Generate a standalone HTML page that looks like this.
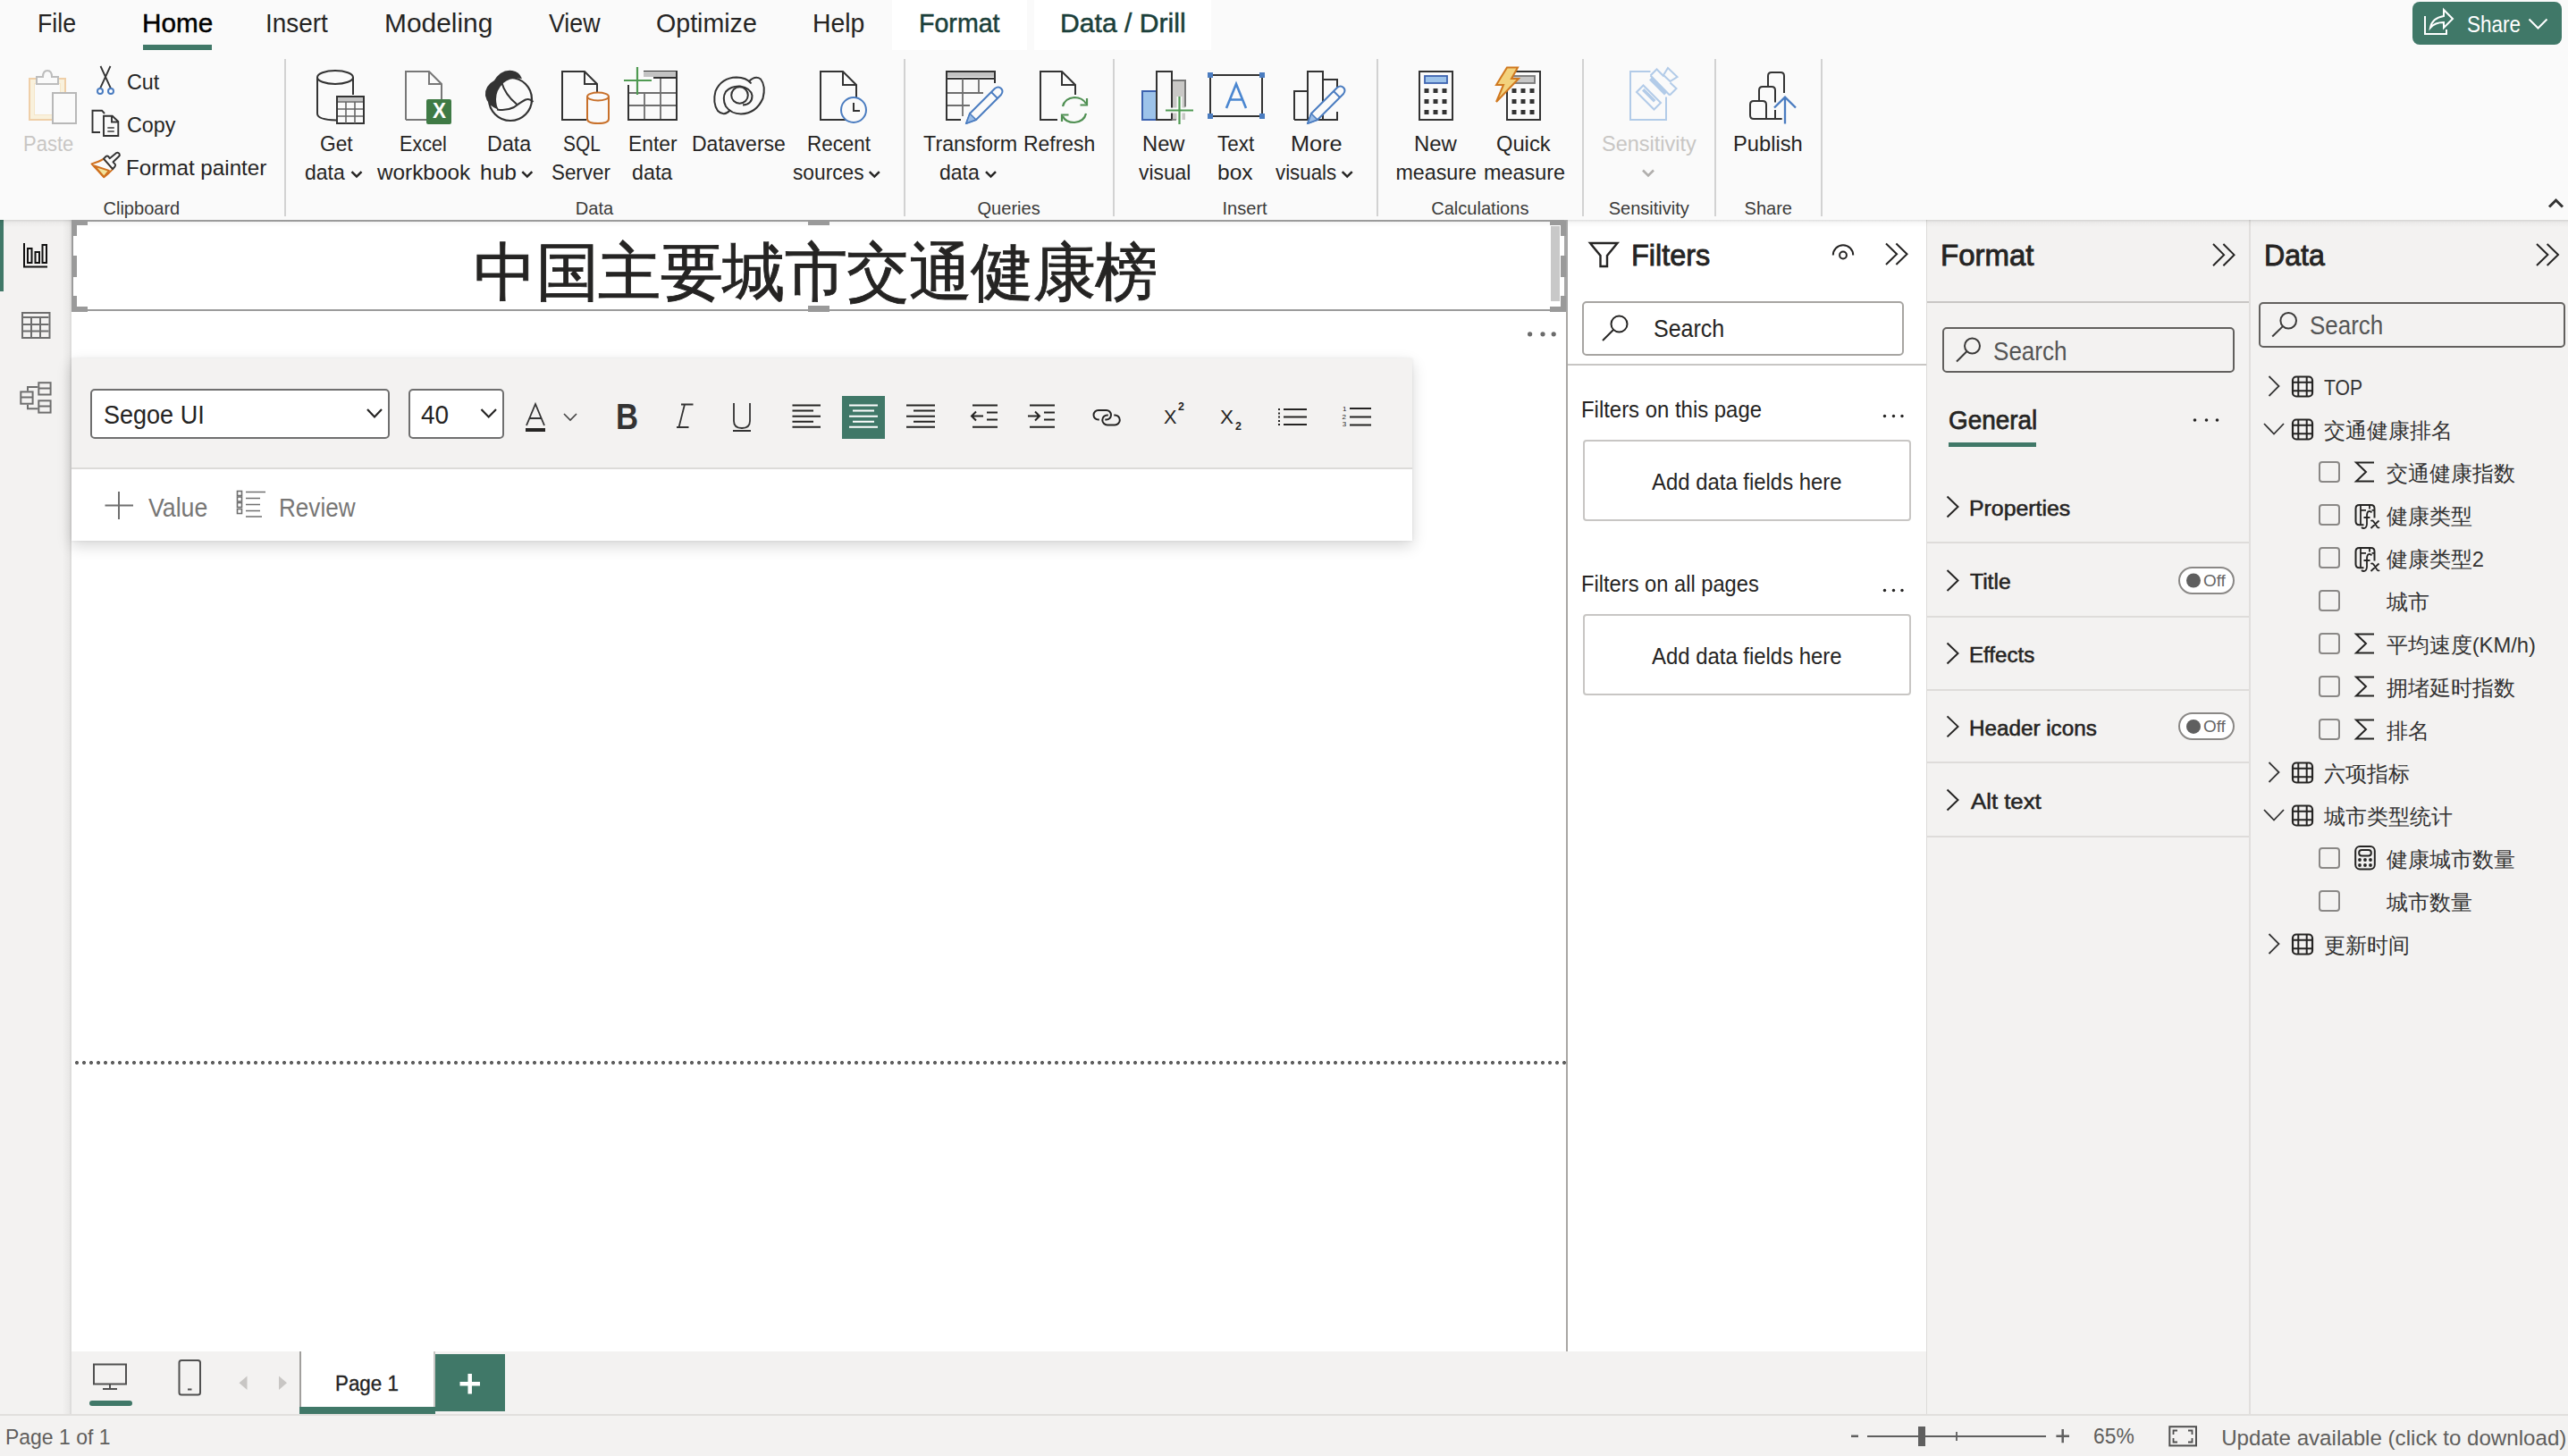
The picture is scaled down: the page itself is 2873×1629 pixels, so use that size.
<!DOCTYPE html>
<html><head><meta charset="utf-8"><style>
html,body{margin:0;padding:0;}
body{width:2873px;height:1629px;position:relative;overflow:hidden;background:#fafafa;font-family:"Liberation Sans",sans-serif;}
div{position:absolute;}
.t{white-space:nowrap;transform-origin:0 0;}
svg{position:absolute;left:0;top:0;}
</style></head><body>
<div style="left:0px;top:0px;width:2873px;height:246px;background:#fafafa;"></div><div style="left:0px;top:246px;width:79px;height:1336px;background:#f3f2f1;"></div><div style="left:70px;top:246px;width:10px;height:1336px;background:linear-gradient(90deg,rgba(0,0,0,0),rgba(0,0,0,0.06));"></div><div style="left:78px;top:246px;width:2px;height:1336px;background:#dedddc;"></div><div style="left:0px;top:246px;width:4px;height:80px;background:#407868;"></div><div style="left:80px;top:246px;width:1672px;height:1266px;background:#ffffff;"></div><div style="left:1752px;top:246px;width:403px;height:1266px;background:#ffffff;"></div><div style="left:1752px;top:246px;width:2px;height:1266px;background:#a9a7a4;"></div><div style="left:2155px;top:246px;width:362px;height:1336px;background:#f3f2f1;"></div><div style="left:2155px;top:246px;width:1px;height:1336px;background:#dcdbd9;"></div><div style="left:2516px;top:246px;width:2px;height:1336px;background:#e1dfdd;"></div><div style="left:2518px;top:246px;width:355px;height:1336px;background:#f3f2f1;"></div><div style="left:80px;top:1512px;width:2075px;height:70px;background:#f3f2f1;"></div><div style="left:0px;top:1582px;width:2873px;height:47px;background:#f3f2f1;"></div><div style="left:0px;top:1582px;width:2873px;height:2px;background:#e1dfdd;"></div><div style="left:0px;top:246px;width:2873px;height:8px;background:linear-gradient(rgba(0,0,0,0.13),rgba(0,0,0,0.03) 35%,rgba(0,0,0,0));"></div><div style="left:160px;top:50px;width:77px;height:6px;background:#407868;"></div><div style="left:998px;top:0px;width:151px;height:56px;background:#ffffff;"></div><div style="left:1157px;top:0px;width:198px;height:56px;background:#ffffff;"></div><div style="left:318px;top:66px;width:2px;height:176px;background:#d2d2d2;"></div><div style="left:1011px;top:66px;width:2px;height:176px;background:#d2d2d2;"></div><div style="left:1245px;top:66px;width:2px;height:176px;background:#d2d2d2;"></div><div style="left:1540px;top:66px;width:2px;height:176px;background:#d2d2d2;"></div><div style="left:1770px;top:66px;width:2px;height:176px;background:#d2d2d2;"></div><div style="left:1918px;top:66px;width:2px;height:176px;background:#d2d2d2;"></div><div style="left:2037px;top:66px;width:2px;height:176px;background:#d2d2d2;"></div><div style="left:2699px;top:2px;width:167px;height:48px;background:#407868;border-radius:8px;"></div><div style="left:80px;top:246px;width:1674px;height:2px;background:#9b9b9b;"></div><div style="left:80px;top:346px;width:1674px;height:2px;background:#9b9b9b;"></div><div style="left:80px;top:246px;width:2px;height:102px;background:#9b9b9b;"></div><div style="left:1750px;top:246px;width:4px;height:102px;background:#a6a6a6;"></div><div style="left:80px;top:247px;width:18px;height:5px;background:#9a9a9a;"></div><div style="left:80px;top:247px;width:6px;height:17px;background:#9a9a9a;"></div><div style="left:80px;top:286px;width:6px;height:24px;background:#9a9a9a;"></div><div style="left:80px;top:331px;width:6px;height:18px;background:#9a9a9a;"></div><div style="left:80px;top:343px;width:18px;height:6px;background:#9a9a9a;"></div><div style="left:904px;top:247px;width:24px;height:5px;background:#9a9a9a;"></div><div style="left:904px;top:342px;width:24px;height:7px;background:#9a9a9a;"></div><div style="left:1734px;top:247px;width:18px;height:5px;background:#9a9a9a;"></div><div style="left:1746px;top:247px;width:6px;height:17px;background:#9a9a9a;"></div><div style="left:1746px;top:286px;width:6px;height:24px;background:#9a9a9a;"></div><div style="left:1746px;top:331px;width:6px;height:18px;background:#9a9a9a;"></div><div style="left:1734px;top:343px;width:18px;height:6px;background:#9a9a9a;"></div><div style="left:1735px;top:252.5px;width:10px;height:84.5px;background:#c8c8c8;"></div><div style="left:80px;top:401px;width:1500px;height:204px;background:#ffffff;box-shadow:0 6px 16px rgba(0,0,0,0.16),0 0 3px rgba(0,0,0,0.08);"></div><div style="left:80px;top:401px;width:1500px;height:122px;background:#f3f2f1;"></div><div style="left:80px;top:523px;width:1500px;height:2px;background:#dcdbd9;"></div><div style="left:100.5px;top:434.5px;width:335.0px;height:56.0px;background:#fff;border:2px solid #6f6f6f;box-sizing:border-box;border-radius:5px;"></div><div style="left:456.5px;top:434.5px;width:107.0px;height:56.0px;background:#fff;border:2px solid #6f6f6f;box-sizing:border-box;border-radius:5px;"></div><div style="left:588px;top:478.5px;width:22px;height:4.0px;background:#252423;"></div><div style="left:942px;top:443px;width:48px;height:48px;background:#407868;"></div><div style="left:84px;top:1187px;width:1668px;height:4px;background-image:radial-gradient(circle at 2px 2px,#5f5f5f 1.8px,rgba(95,95,95,0) 2.3px);background-size:8px 4px;"></div><div style="left:1770px;top:337px;width:360px;height:61px;background:#fff;border:2px solid #a7a5a2;box-sizing:border-box;border-radius:5px;"></div><div style="left:1754px;top:407px;width:401px;height:2px;background:#c8c6c4;"></div><div style="left:1771px;top:492px;width:367px;height:91px;background:#fff;border:2px solid #c8c6c4;box-sizing:border-box;border-radius:4px;"></div><div style="left:1771px;top:687px;width:367px;height:91px;background:#fff;border:2px solid #c8c6c4;box-sizing:border-box;border-radius:4px;"></div><div style="left:2156px;top:337px;width:360px;height:2px;background:#c8c6c4;"></div><div style="left:2172.5px;top:365.5px;width:327.0px;height:51.5px;border:2px solid #62605e;box-sizing:border-box;border-radius:5px;"></div><div style="left:2180px;top:495px;width:98px;height:4.5px;background:#407868;"></div><div style="left:2156px;top:606px;width:360px;height:2px;background:#dedcda;"></div><div style="left:2156px;top:689px;width:360px;height:2px;background:#dedcda;"></div><div style="left:2436.5px;top:634.0px;width:63.0px;height:31.0px;background:#fff;border:2px solid #8a8886;box-sizing:border-box;border-radius:16px;"></div><div style="left:2156px;top:771px;width:360px;height:2px;background:#dedcda;"></div><div style="left:2156px;top:852px;width:360px;height:2px;background:#dedcda;"></div><div style="left:2436.5px;top:797.4px;width:63.0px;height:31.0px;background:#fff;border:2px solid #8a8886;box-sizing:border-box;border-radius:16px;"></div><div style="left:2156px;top:935px;width:360px;height:2px;background:#dedcda;"></div><div style="left:2526.5px;top:337.7px;width:343.0px;height:51.30000000000001px;border:2px solid #62605e;box-sizing:border-box;border-radius:5px;"></div><div style="left:2594px;top:516px;width:24px;height:24px;border:2px solid #8a8886;box-sizing:border-box;border-radius:4px;"></div><div style="left:2594px;top:564px;width:24px;height:24px;border:2px solid #8a8886;box-sizing:border-box;border-radius:4px;"></div><div style="left:2594px;top:612px;width:24px;height:24px;border:2px solid #8a8886;box-sizing:border-box;border-radius:4px;"></div><div style="left:2594px;top:660px;width:24px;height:24px;border:2px solid #8a8886;box-sizing:border-box;border-radius:4px;"></div><div style="left:2594px;top:708px;width:24px;height:24px;border:2px solid #8a8886;box-sizing:border-box;border-radius:4px;"></div><div style="left:2594px;top:756px;width:24px;height:24px;border:2px solid #8a8886;box-sizing:border-box;border-radius:4px;"></div><div style="left:2594px;top:804px;width:24px;height:24px;border:2px solid #8a8886;box-sizing:border-box;border-radius:4px;"></div><div style="left:2594px;top:948px;width:24px;height:24px;border:2px solid #8a8886;box-sizing:border-box;border-radius:4px;"></div><div style="left:2594px;top:996px;width:24px;height:24px;border:2px solid #8a8886;box-sizing:border-box;border-radius:4px;"></div><div style="left:100px;top:1567px;width:48px;height:6px;background:#407868;border-radius:3px;"></div><div style="left:335px;top:1512px;width:152px;height:70px;background:#ffffff;"></div><div style="left:335px;top:1512px;width:2px;height:70px;background:#a19f9d;"></div><div style="left:485px;top:1512px;width:2px;height:70px;background:#c8c6c4;"></div><div style="left:335px;top:1574px;width:152px;height:8px;background:#407868;"></div><div style="left:487px;top:1515px;width:78px;height:64px;background:#407868;"></div><div style="left:2146px;top:1596px;width:8px;height:21.700000000000045px;background:#5f5f5f;"></div>
<svg width="2873" height="1629" viewBox="0 0 2873 1629" fill="none" stroke-linecap="butt">
<path d="M393.5 192.05 L399 197.55 L404.5 192.05" stroke="#252423" stroke-width="2.5"/><path d="M584.3 192.05 L589.8 197.55 L595.3 192.05" stroke="#252423" stroke-width="2.5"/><path d="M972.8 192.05 L978.3 197.55 L983.8 192.05" stroke="#252423" stroke-width="2.5"/><path d="M1103.0 192.05 L1108.5 197.55 L1114.0 192.05" stroke="#252423" stroke-width="2.5"/><path d="M1501.7 192.05 L1507.2 197.55 L1512.7 192.05" stroke="#252423" stroke-width="2.5"/><path d="M1838.0 190.5 L1844 196.5 L1850.0 190.5" stroke="#b0aeac" stroke-width="2.5"/><rect x="33" y="88" width="40" height="46" fill="#f9f1dc" stroke="#efcfa8" stroke-width="2"/><rect x="38.5" y="93.5" width="29" height="35" fill="#fafafa" stroke="#f5e6c8" stroke-width="1"/><path d="M41 94 V86 H48 Q48 79 53 79 Q58 79 58 86 H65 V94 Z" fill="#fafafa" stroke="#bdbdbd" stroke-width="2"/><rect x="59" y="104" width="26" height="34" fill="#fafafa" stroke="#b8b8b8" stroke-width="2"/><path d="M112.5 74 L124 99 M123.5 74 L112 99" stroke="#333333" stroke-width="1.8"/><circle cx="112" cy="102" r="3" stroke="#4a7cc0" stroke-width="2" fill="#fff"/><circle cx="124" cy="102" r="3" stroke="#4a7cc0" stroke-width="2" fill="#fff"/><path d="M112 148 H103.5 V123.7 H114 L117 127" stroke="#333333" stroke-width="1.9"/><path d="M116 152 V129.7 H125.7 L132.3 136 V152 Z M125 129.7 V136.5 H132.3" stroke="#333333" stroke-width="1.9" fill="#fafafa"/><path d="M120.3 143 H127.8 M120.3 147 H127.8" stroke="#6a6a6a" stroke-width="1.9"/><path d="M102.5 183.3 Q111 181 116 177.6 L126.2 189.2 Q121 195 116.3 198.3 Z" fill="#fafafa" stroke="#d0701e" stroke-width="1.9" stroke-linejoin="round"/><path d="M105.5 185.5 L122 190.8 L116.3 197.8 Z" fill="#f2e29a" stroke="#d0701e" stroke-width="1.9" stroke-linejoin="round"/><path d="M116 177.6 L118.5 175 Q120 174 121.5 175.3 L122.7 177.2 L130.3 171 Q132 170 133.4 171.8 Q134.5 173.5 133 175 L126.5 181.3 L128.7 183.6 Q129.7 185 128.5 186.3 L126.2 189.2 Z" stroke="#333333" stroke-width="1.9" fill="#fafafa" stroke-linejoin="round"/><path d="M355 86.5 V127 Q355 134 376 134.5" stroke="#333333" stroke-width="2"/><path d="M395 86.5 V106" stroke="#333333" stroke-width="2"/><ellipse cx="375" cy="86.5" rx="20" ry="7.5" stroke="#333333" stroke-width="2"/><rect x="377" y="108" width="30" height="30" fill="#fafafa" stroke="#333333" stroke-width="2"/><rect x="378" y="109" width="28" height="4.5" fill="#c3c3c3"/><path d="M378 114 H406 M378 122 H406 M378 130 H406 M387 114 V138 M397 114 V138" stroke="#666" stroke-width="1.6"/><path d="M454 134 H477 M454 134 V80 H480 L494 94 V111 M480 80 V94 H494" stroke="#777" stroke-width="2"/><rect x="477" y="111" width="28" height="28" rx="2" fill="#3f7a45"/><circle cx="571" cy="111" r="24" stroke="#333333" stroke-width="2.2"/><path d="M558 123 Q545 118 543 107 Q542 96 553 90 Q556 85 560 82 Q566 78 573 79 Q581 80 584 88 Q572 86 563 93 Q555 101 555 111 Q555 118 558 123 Z" fill="#333333"/><path d="M561 91.5 Q565 106 578 116.5 M556 122.5 Q566 124.5 575 120 Q583 114 588 111.5 Q593 110 596.5 114" stroke="#333333" stroke-width="2"/><path d="M656 134 H629 V80 H654 L668 94 V104 M654 80 V94 H668" stroke="#333333" stroke-width="2"/><path d="M657 108 V133 Q657 138 669 138 Q681 138 681 133 V108" stroke="#c8702a" stroke-width="2" fill="#fafafa"/><ellipse cx="669" cy="108" rx="12" ry="4.5" stroke="#c8702a" stroke-width="2" fill="#fafafa"/><path d="M703 95 V134 H757 V80 H720" stroke="#333333" stroke-width="2"/><rect x="720" y="80" width="36" height="6" fill="#c3c3c3"/><path d="M731 87 H756" stroke="#333333" stroke-width="2"/><path d="M704 104 H756 M704 118 H756 M721 104 V133 M739 88 V133 M712 104 H704" stroke="#6e6e6e" stroke-width="1.8"/><path d="M713 75 V106 M698 90 H729" stroke="#4f9a52" stroke-width="2.2"/><path d="M817 123 Q810 131 803 124 Q797 115 800.5 102 Q807 87 824 86.5 Q835 86.5 840.5 93.5" stroke="#333333" stroke-width="2"/><path d="M837.5 91.5 Q845 84 851 88.5 Q857 96 853.5 110 Q846 127 829 127.5 Q818 127.5 812 119 Q807.5 110 812 102.5 Q818 96 828 96.5 Q840 98.5 841.5 107 Q841.5 117 831 117.5" stroke="#333333" stroke-width="2"/><circle cx="827.5" cy="106.5" r="9.3" stroke="#333333" stroke-width="2"/><path d="M950 134 H918 V80 H943 L958 95 V110 M943 80 V95 H958" stroke="#333333" stroke-width="2"/><circle cx="955" cy="123" r="14" stroke="#4a7cc0" stroke-width="2" fill="#fafafa"/><path d="M955 115 V124 H962" stroke="#333333" stroke-width="2"/><path d="M1075 134 H1059 V80 H1113 V93" stroke="#333333" stroke-width="2"/><rect x="1060" y="81" width="52" height="5" fill="#c3c3c3"/><path d="M1059 88 H1113" stroke="#333333" stroke-width="2"/><path d="M1060 104 H1100 M1060 118 H1085 M1077 88 V130 M1095 88 V105" stroke="#6e6e6e" stroke-width="1.8"/><path d="M1081 138 L1085 127 L1113 99 Q1117 96 1120 99 Q1123 102 1120 106 L1092 134 Z" fill="#fafafa" stroke="#4a7cc0" stroke-width="2" stroke-linejoin="round"/><path d="M1081 138 L1085 127 L1092 134 Z" fill="#9bbde6" stroke="#4a7cc0" stroke-width="1.5"/><path d="M1109 103 L1116 110" stroke="#4a7cc0" stroke-width="1.8"/><path d="M1183 134 H1164 V80 H1188 L1203 95 V106 M1188 80 V95 H1203" stroke="#333333" stroke-width="2"/><path d="M1189 119 Q1191 110 1202 109 Q1211 109 1215 116 M1215 127 Q1213 136 1202 137 Q1192 137 1189 130" stroke="#4f8f52" stroke-width="2.2" fill="none"/><path d="M1216 110 V117.5 H1208.5 M1188 136 V128.5 H1195.5" stroke="#4f8f52" stroke-width="2.2"/><rect x="1278" y="102" width="16" height="32" fill="#9dc3ea" stroke="#3d63b0" stroke-width="2"/><path d="M1311 90 H1326 V134 H1311 Z" fill="#c9c8c6"/><path d="M1311 90 H1326 V119.5" stroke="#777" stroke-width="2"/><rect x="1294" y="80" width="17" height="54" fill="#fafafa" stroke="#333333" stroke-width="2"/><path d="M1319.5 108 V139 M1304 123.5 H1335" stroke="#fafafa" stroke-width="6"/><path d="M1311 134 H1316" stroke="#777" stroke-width="1.6"/><path d="M1319.5 108 V139 M1304 123.5 H1335" stroke="#4f9a52" stroke-width="2.2"/><rect x="1354" y="84" width="58" height="46" stroke="#333333" stroke-width="2"/><rect x="1351" y="81" width="6" height="6" fill="#4a7cc0"/><rect x="1409" y="81" width="6" height="6" fill="#4a7cc0"/><rect x="1351" y="127" width="6" height="6" fill="#4a7cc0"/><rect x="1409" y="127" width="6" height="6" fill="#4a7cc0"/><path d="M1372 121 L1383 94 L1394 121 M1376 111.5 H1390" stroke="#4a86d0" stroke-width="2.6"/><path d="M1448 134 V102 H1463 M1463 134 V80 H1480 V134 M1480 89 H1496 V103 M1496 125 V134 H1448" stroke="#333333" stroke-width="2" fill="#fafafa"/><path d="M1463 138 L1467 127 L1496 98 Q1500 95 1503 98 Q1506 101 1503 105 L1474 134 Z" fill="#fafafa" stroke="#4a7cc0" stroke-width="2" stroke-linejoin="round"/><path d="M1463 138 L1467 127 L1474 134 Z" fill="#9bbde6" stroke="#4a7cc0" stroke-width="1.5"/><path d="M1492 102 L1499 109" stroke="#4a7cc0" stroke-width="1.8"/><rect x="1588" y="80" width="37" height="54" stroke="#333333" stroke-width="2"/><rect x="1594" y="85" width="25" height="8" fill="#9dc3ea" stroke="#3d63b0" stroke-width="1.8"/><rect x="1593.5" y="99" width="5" height="5" fill="#333333"/><rect x="1603.5" y="99" width="5" height="5" fill="#333333"/><rect x="1613.5" y="99" width="5" height="5" fill="#333333"/><rect x="1593.5" y="111" width="5" height="5" fill="#333333"/><rect x="1603.5" y="111" width="5" height="5" fill="#333333"/><rect x="1613.5" y="111" width="5" height="5" fill="#333333"/><rect x="1593.5" y="123" width="5" height="5" fill="#333333"/><rect x="1603.5" y="123" width="5" height="5" fill="#333333"/><rect x="1613.5" y="123" width="5" height="5" fill="#333333"/><rect x="1686" y="80" width="37" height="54" stroke="#333333" stroke-width="2"/><rect x="1692" y="85" width="25" height="8" fill="#c6c6c6" stroke="#777" stroke-width="1.8"/><rect x="1691.5" y="99" width="5" height="5" fill="#333333"/><rect x="1701.5" y="99" width="5" height="5" fill="#333333"/><rect x="1711.5" y="99" width="5" height="5" fill="#333333"/><rect x="1691.5" y="111" width="5" height="5" fill="#333333"/><rect x="1701.5" y="111" width="5" height="5" fill="#333333"/><rect x="1711.5" y="111" width="5" height="5" fill="#333333"/><rect x="1691.5" y="123" width="5" height="5" fill="#333333"/><rect x="1701.5" y="123" width="5" height="5" fill="#333333"/><rect x="1711.5" y="123" width="5" height="5" fill="#333333"/><path d="M1686 75.5 H1698 L1691 88 H1699 L1674 114 L1682 95 H1674 Z" fill="#f3d27c" stroke="#d0781f" stroke-width="2" stroke-linejoin="miter"/><path d="M1846.5 80 H1824 V134 H1864 V108.5" stroke="#b2cbe8" stroke-width="2"/><path d="M1846.5 84.5 L1853.5 77.5 L1861.5 85.5 M1868.5 92.5 L1875.5 99 L1868 106.5" stroke="#b2cbe8" stroke-width="2" stroke-linejoin="miter"/><path d="M1846.5 84.5 L1868 106.5" stroke="#b2cbe8" stroke-width="2"/><path d="M1861 84 L1866 76 L1876.5 86 L1868.5 91 Z" stroke="#b2cbe8" stroke-width="2" stroke-linejoin="miter"/><path d="M1845 89.5 L1848.5 86 L1865.5 103 L1862 106.5 Z" fill="#b2cbe8"/><path d="M1831 103 L1838.5 95.5 L1858 115 L1850.5 122.5 Z" stroke="#b2cbe8" stroke-width="2" stroke-linejoin="miter"/><path d="M1837 101.5 L1839.5 99 L1852.5 112 L1850 114.5 Z" fill="#b2cbe8"/><path d="M1976 133 V117 Q1976 113 1972 113 H1962 Q1958 113 1958 117 V129 Q1958 133 1962 133 H1993.7" stroke="#333333" stroke-width="2"/><path d="M1968 113 V101 Q1968 97 1972 97 H1982 Q1986 97 1986 101 V114.5 M1986 123 V133" stroke="#333333" stroke-width="2"/><path d="M1978 97 V85 Q1978 81 1982 81 H1992 Q1996 81 1996 85 V104" stroke="#333333" stroke-width="2"/><path d="M1997 138.5 V109 M1985 120.5 L1997 108.7 L2009 120.5" stroke="#4a7cc0" stroke-width="2.3"/><path d="M2713 18 V38 H2737 V33" stroke="#fff" stroke-width="2"/><path d="M2719 31 Q2721 20 2734 18 V11 L2744 21 L2734 31 V25 Q2724 25 2719 31 Z" stroke="#fff" stroke-width="2" stroke-linejoin="miter"/><path d="M2829.5 21.5 L2839.5 31.5 L2849.5 21.5" stroke="#fff" stroke-width="2"/><path d="M2852 231.5 L2859.5 224 L2867 231.5" stroke="#333333" stroke-width="3"/><path d="M27 272 V298.5 H53" stroke="#111" stroke-width="2"/><rect x="31" y="278" width="4.5" height="16" stroke="#111" stroke-width="2"/><rect x="39.5" y="282" width="4.5" height="12" stroke="#111" stroke-width="2"/><rect x="47.5" y="274" width="4.5" height="20" stroke="#111" stroke-width="2"/><rect x="25" y="350" width="30.5" height="28" stroke="#6e6e6e" stroke-width="2"/><path d="M26 355 H54.5 M26 363 H54.5 M26 370.5 H54.5 M35 355 V377 M45 355 V377" stroke="#6e6e6e" stroke-width="2"/><rect x="23.3" y="438.4" width="13.3" height="13.3" stroke="#6e6e6e" stroke-width="2"/><path d="M24 444.5 H36" stroke="#6e6e6e" stroke-width="2"/><rect x="43.3" y="428.2" width="13.3" height="13.3" stroke="#6e6e6e" stroke-width="2"/><path d="M44 434.5 H56" stroke="#6e6e6e" stroke-width="2"/><rect x="43.3" y="448.3" width="13.3" height="13.3" stroke="#6e6e6e" stroke-width="2"/><path d="M44 454.5 H56" stroke="#6e6e6e" stroke-width="2"/><path d="M31 437.4 V432.9 H42.3 M31 452.7 V457.3 H42.3" stroke="#6e6e6e" stroke-width="2"/><circle cx="1711.6" cy="373.8" r="2.6" fill="#6b6b6b"/><circle cx="1726" cy="373.8" r="2.6" fill="#6b6b6b"/><circle cx="1738.2" cy="373.8" r="2.6" fill="#6b6b6b"/><path d="M411 458 L419 466.5 L427 458" stroke="#252423" stroke-width="2.2"/><path d="M538.5 458 L546.7 466.5 L555 458" stroke="#252423" stroke-width="2.2"/><path d="M589 476 L599 452 L609 476 M592.5 468 H605.5" stroke="#333" stroke-width="1.8"/><path d="M631 463 L638 470 L645 463" stroke="#444" stroke-width="1.6"/><path d="M766 452.5 L759.5 478 M762 452.5 H775.5 M757 478 H770.5" stroke="#333" stroke-width="1.8"/><path d="M761 453 L767 453" stroke="#333" stroke-width="0"/><path d="M821 451 V471 Q821 479 830 479 Q839 479 839 471 V451 M820 482 H840" stroke="#333" stroke-width="1.8"/><path d="M886.5 453.5 H918 M886.5 459.5 H910 M886.5 465.8 H918 M886.5 471.8 H910 M886.5 477.8 H918" stroke="#252423" stroke-width="2"/><path d="M950 453.5 H982 M954 459.5 H978 M950 465.8 H982 M954 471.8 H978 M950 477.8 H982" stroke="#fff" stroke-width="2"/><path d="M1014 453.5 H1046 M1022 459.5 H1046 M1014 465.8 H1046 M1022 471.8 H1046 M1014 477.8 H1046" stroke="#252423" stroke-width="2"/><path d="M1088 453.5 H1116 M1104 461.5 H1116 M1104 469.5 H1116 M1088 477.8 H1116 M1087 465.5 H1100 M1092 460.5 L1087 465.5 L1092 470.5" stroke="#252423" stroke-width="2"/><path d="M1152 453.5 H1180 M1168 461.5 H1180 M1168 469.5 H1180 M1152 477.8 H1180 M1150 465.5 H1163 M1158 460.5 L1163 465.5 L1158 470.5" stroke="#252423" stroke-width="2"/><path d="M1229.8 469.5 H1228.75 A5.25 5.25 0 0 1 1228.75 459 H1237.75 A5.25 5.25 0 0 1 1237.75 469.5 H1236.3" stroke="#252423" stroke-width="2"/><path d="M1239.8 464.4 H1238.8 A5.5 5.5 0 0 0 1238.8 475.4 H1247.3 A5.5 5.5 0 0 0 1247.3 464.4 H1246.3" stroke="#252423" stroke-width="2"/><path d="M1436 458 H1462 M1436 466.5 H1462 M1436 475 H1462" stroke="#252423" stroke-width="2"/><rect x="1430" y="457" width="2" height="2" fill="#252423"/><rect x="1430" y="461.5" width="2" height="2" fill="#252423"/><rect x="1430" y="465.5" width="2" height="2" fill="#252423"/><rect x="1430" y="470" width="2" height="2" fill="#252423"/><rect x="1430" y="474" width="2" height="2" fill="#252423"/><path d="M1510 457 H1534 M1510 466.5 H1534 M1510 475.5 H1534" stroke="#252423" stroke-width="2"/><path d="M133 550 V581 M117.5 565.5 H149" stroke="#6f6f6f" stroke-width="2"/><rect x="265.5" y="549.5" width="5" height="5" stroke="#6f6f6f" stroke-width="1.6"/><rect x="265.5" y="556.0" width="5" height="5" stroke="#6f6f6f" stroke-width="1.6"/><rect x="265.5" y="562.5" width="5" height="5" stroke="#6f6f6f" stroke-width="1.6"/><rect x="265.5" y="569.5" width="5" height="5" stroke="#6f6f6f" stroke-width="1.6"/><path d="M275 550.5 H297 M275 557.5 H291 M275 564.5 H291 M275 571.5 H291 M275 578 H293" stroke="#6f6f6f" stroke-width="1.6"/><path d="M1779 272 H1809.5 L1798 286 V298 H1790.5 V286 Z" stroke="#252423" stroke-width="2.4" stroke-linejoin="miter"/><path d="M2050.8 285.5 A11.2 11.2 0 0 1 2073.2 285.5" stroke="#252423" stroke-width="2"/><circle cx="2062" cy="285.5" r="3.9" stroke="#252423" stroke-width="2"/><path d="M2110 272.5 L2122.1025 284.25 L2110 296 M2121.3975 272.5 L2133.5 284.25 L2121.3975 296" stroke="#252423" stroke-width="2"/><circle cx="1811.5" cy="362.5" r="9.0" stroke="#252423" stroke-width="2"/><path d="M1805.0 369.0 L1793.0 381.0" stroke="#252423" stroke-width="2"/><circle cx="2108.5" cy="465.5" r="1.7" fill="#252423"/><circle cx="2118.5" cy="465.5" r="1.7" fill="#252423"/><circle cx="2128" cy="465.5" r="1.7" fill="#252423"/><circle cx="2108.5" cy="660.5" r="1.7" fill="#252423"/><circle cx="2118.5" cy="660.5" r="1.7" fill="#252423"/><circle cx="2128" cy="660.5" r="1.7" fill="#252423"/><path d="M2476 273 L2488.1025 285.15 L2476 297.3 M2487.3975 273 L2499.5 285.15 L2487.3975 297.3" stroke="#252423" stroke-width="2"/><circle cx="2206.5" cy="387.0" r="8.5" stroke="#3b3a39" stroke-width="2"/><path d="M2200.3 393.2 L2189.0 404.5" stroke="#3b3a39" stroke-width="2"/><circle cx="2455.5" cy="470" r="1.8" fill="#252423"/><circle cx="2468.5" cy="470" r="1.8" fill="#252423"/><circle cx="2480.5" cy="470" r="1.8" fill="#252423"/><path d="M2178.5 555.5 L2190.5 567.0 L2178.5 578.5" stroke="#252423" stroke-width="2"/><path d="M2178.5 638.0 L2190.5 649.5 L2178.5 661.0" stroke="#252423" stroke-width="2"/><circle cx="2454" cy="649.5" r="8" fill="#5f5f5f"/><path d="M2178.5 719.5 L2190.5 731.0 L2178.5 742.5" stroke="#252423" stroke-width="2"/><path d="M2178.5 801.4 L2190.5 812.9 L2178.5 824.4" stroke="#252423" stroke-width="2"/><circle cx="2454" cy="812.9" r="8" fill="#5f5f5f"/><path d="M2178.5 883.5 L2190.5 895.0 L2178.5 906.5" stroke="#252423" stroke-width="2"/><path d="M2838 273 L2850.36 285.0 L2838 297 M2849.64 273 L2862.0 285.0 L2849.64 297" stroke="#252423" stroke-width="2"/><circle cx="2560.2" cy="358.8" r="8.8" stroke="#3b3a39" stroke-width="2"/><path d="M2553.9 365.1 L2542.2 376.5" stroke="#3b3a39" stroke-width="2"/><path d="M2538.5 421 L2549.5 432 L2538.5 443" stroke="#333" stroke-width="1.8"/><rect x="2565" y="421.5" width="22" height="22" rx="4" stroke="#252423" stroke-width="2.2"/><path d="M2571.3 421.5 V443.5 M2580.7 421.5 V443.5 M2565 427.8 H2587 M2565 437.2 H2587" stroke="#252423" stroke-width="2"/><path d="M2533 474 L2544 485.5 L2555 474" stroke="#333" stroke-width="1.8"/><rect x="2565" y="469.5" width="22" height="22" rx="4" stroke="#252423" stroke-width="2.2"/><path d="M2571.3 469.5 V491.5 M2580.7 469.5 V491.5 M2565 475.8 H2587 M2565 485.2 H2587" stroke="#252423" stroke-width="2"/><path d="M2656 517.5 H2636 L2647 528 L2636 538.5 H2656" stroke="#252423" stroke-width="2"/><path d="M2644.5 587.2 H2639.5 Q2635.5 587.2 2635.5 583.2 V569.0 Q2635.5 565.0 2639.5 565.0 H2652.5 Q2656.5 565.0 2656.5 569.0 V579.5" stroke="#252423" stroke-width="2"/><path d="M2641 565.0 V587.2 M2641 570.9 H2647 M2653.5 570.9 H2656.5 M2651 565.0 V569.5" stroke="#252423" stroke-width="1.8"/><path d="M2653.5 573.3 Q2651.5 571.3 2649.5 572.3 Q2648 573.5 2648 577.5 V586.5 Q2647.5 591.0 2644.5 591.0 Q2643 591.0 2642 590.0 M2644.5 579.0 H2651.5" stroke="#252423" stroke-width="1.8"/><path d="M2652.5 583.0 Q2654 581.5 2655.5 583.5 L2659.5 589.5 Q2660.8 591.2 2662 589.8 M2661.5 582.5 L2652.5 591.0" stroke="#252423" stroke-width="1.8"/><path d="M2644.5 635.2 H2639.5 Q2635.5 635.2 2635.5 631.2 V617.0 Q2635.5 613.0 2639.5 613.0 H2652.5 Q2656.5 613.0 2656.5 617.0 V627.5" stroke="#252423" stroke-width="2"/><path d="M2641 613.0 V635.2 M2641 618.9 H2647 M2653.5 618.9 H2656.5 M2651 613.0 V617.5" stroke="#252423" stroke-width="1.8"/><path d="M2653.5 621.3 Q2651.5 619.3 2649.5 620.3 Q2648 621.5 2648 625.5 V634.5 Q2647.5 639.0 2644.5 639.0 Q2643 639.0 2642 638.0 M2644.5 627.0 H2651.5" stroke="#252423" stroke-width="1.8"/><path d="M2652.5 631.0 Q2654 629.5 2655.5 631.5 L2659.5 637.5 Q2660.8 639.2 2662 637.8 M2661.5 630.5 L2652.5 639.0" stroke="#252423" stroke-width="1.8"/><path d="M2656 709.5 H2636 L2647 720 L2636 730.5 H2656" stroke="#252423" stroke-width="2"/><path d="M2656 757.5 H2636 L2647 768 L2636 778.5 H2656" stroke="#252423" stroke-width="2"/><path d="M2656 805.5 H2636 L2647 816 L2636 826.5 H2656" stroke="#252423" stroke-width="2"/><path d="M2538.5 853 L2549.5 864 L2538.5 875" stroke="#333" stroke-width="1.8"/><rect x="2565" y="853.5" width="22" height="22" rx="4" stroke="#252423" stroke-width="2.2"/><path d="M2571.3 853.5 V875.5 M2580.7 853.5 V875.5 M2565 859.8 H2587 M2565 869.2 H2587" stroke="#252423" stroke-width="2"/><path d="M2533 906 L2544 917.5 L2555 906" stroke="#333" stroke-width="1.8"/><rect x="2565" y="901.5" width="22" height="22" rx="4" stroke="#252423" stroke-width="2.2"/><path d="M2571.3 901.5 V923.5 M2580.7 901.5 V923.5 M2565 907.8 H2587 M2565 917.2 H2587" stroke="#252423" stroke-width="2"/><rect x="2635.2" y="947" width="21.6" height="25.6" rx="5" stroke="#252423" stroke-width="2"/><rect x="2639.2" y="951" width="13.6" height="6.6" rx="3" stroke="#252423" stroke-width="2"/><circle cx="2640" cy="962" r="1.9" fill="#252423"/><circle cx="2646" cy="962" r="1.9" fill="#252423"/><circle cx="2652" cy="962" r="1.9" fill="#252423"/><circle cx="2640" cy="968" r="1.9" fill="#252423"/><circle cx="2646" cy="968" r="1.9" fill="#252423"/><circle cx="2652" cy="968" r="1.9" fill="#252423"/><path d="M2538.5 1045 L2549.5 1056 L2538.5 1067" stroke="#333" stroke-width="1.8"/><rect x="2565" y="1045.5" width="22" height="22" rx="4" stroke="#252423" stroke-width="2.2"/><path d="M2571.3 1045.5 V1067.5 M2580.7 1045.5 V1067.5 M2565 1051.8 H2587 M2565 1061.2 H2587" stroke="#252423" stroke-width="2"/><rect x="105" y="1526.5" width="36" height="22" stroke="#505050" stroke-width="2"/><path d="M123 1549 V1554 M115 1554 H131" stroke="#505050" stroke-width="2"/><rect x="200.5" y="1522" width="23.5" height="38.5" rx="2.5" stroke="#505050" stroke-width="2"/><path d="M210 1554.5 H214.5" stroke="#505050" stroke-width="2"/><path d="M276.5 1539.5 L267.5 1547.3 L276.5 1555 Z" fill="#c8c6c4"/><path d="M312 1539.5 L321 1547.3 L312 1555 Z" fill="#c8c6c4"/><path d="M525.7 1537 V1559.5 M514.5 1548.2 H537" stroke="#fff" stroke-width="4.5"/><path d="M2071 1606.8 H2079" stroke="#5f5f5f" stroke-width="2.5"/><path d="M2089 1607 H2289" stroke="#5f5f5f" stroke-width="2"/><path d="M2189 1602 V1612" stroke="#5f5f5f" stroke-width="1.8"/><path d="M2307.7 1599 V1614.3 M2300.4 1606.7 H2315" stroke="#5f5f5f" stroke-width="2.5"/><rect x="2427.3" y="1596.2" width="29.7" height="21.2" stroke="#505050" stroke-width="2"/><path d="M2431.5 1605 V1600.5 H2436 M2452.5 1605 V1600.5 H2448 M2431.5 1609 V1613.5 H2436 M2452.5 1609 V1613.5 H2448" stroke="#505050" stroke-width="1.8"/>
</svg>
<div class="t" style="left:42.11px;top:11.04px;font-size:29.36px;line-height:29.36px;color:#252423;transform:scaleX(0.9105);">File</div><div class="t" style="left:158.56px;top:11.04px;font-size:29.36px;line-height:29.36px;color:#000;-webkit-text-stroke:0.45px #000;transform:scaleX(1.0120);">Home</div><div class="t" style="left:297.43px;top:11.04px;font-size:29.36px;line-height:29.36px;color:#252423;transform:scaleX(0.9500);">Insert</div><div class="t" style="left:429.55px;top:11.04px;font-size:29.36px;line-height:29.36px;color:#252423;transform:scaleX(1.0186);">Modeling</div><div class="t" style="left:613.59px;top:11.04px;font-size:29.36px;line-height:29.36px;color:#252423;transform:scaleX(0.9117);">View</div><div class="t" style="left:734.26px;top:11.04px;font-size:29.36px;line-height:29.36px;color:#252423;transform:scaleX(0.9739);">Optimize</div><div class="t" style="left:908.57px;top:11.04px;font-size:29.36px;line-height:29.36px;color:#252423;transform:scaleX(0.9673);">Help</div><div class="t" style="left:1027.66px;top:11.04px;font-size:29.36px;line-height:29.36px;color:#1b3f3a;-webkit-text-stroke:0.5px #1b3f3a;transform:scaleX(0.9738);">Format</div><div class="t" style="left:1185.83px;top:11.04px;font-size:29.36px;line-height:29.36px;color:#1b3f3a;-webkit-text-stroke:0.5px #1b3f3a;transform:scaleX(1.0260);">Data / Drill</div><div class="t" style="left:115.46px;top:223.15px;font-size:20.06px;line-height:20.06px;color:#3b3a39;">Clipboard</div><div class="t" style="left:643.80px;top:223.15px;font-size:20.06px;line-height:20.06px;color:#3b3a39;">Data</div><div class="t" style="left:1093.53px;top:223.15px;font-size:20.06px;line-height:20.06px;color:#3b3a39;">Queries</div><div class="t" style="left:1367.56px;top:223.15px;font-size:20.06px;line-height:20.06px;color:#3b3a39;">Insert</div><div class="t" style="left:1601.22px;top:223.15px;font-size:20.06px;line-height:20.06px;color:#3b3a39;">Calculations</div><div class="t" style="left:1799.63px;top:223.15px;font-size:20.06px;line-height:20.06px;color:#3b3a39;">Sensitivity</div><div class="t" style="left:1951.53px;top:223.15px;font-size:20.06px;line-height:20.06px;color:#3b3a39;">Share</div><div class="t" style="left:25.70px;top:150.23px;font-size:23.26px;line-height:23.26px;color:#c8c6c4;transform:scaleX(0.9463);">Paste</div><div class="t" style="left:357.86px;top:150.23px;font-size:23.26px;line-height:23.26px;color:#252423;transform:scaleX(0.9789);">Get</div><div class="t" style="left:341.03px;top:182.23px;font-size:23.26px;line-height:23.26px;color:#252423;transform:scaleX(0.9892);">data</div><div class="t" style="left:446.73px;top:150.23px;font-size:23.26px;line-height:23.26px;color:#252423;transform:scaleX(0.9270);">Excel</div><div class="t" style="left:421.52px;top:182.23px;font-size:23.26px;line-height:23.26px;color:#252423;transform:scaleX(1.0464);">workbook</div><div class="t" style="left:545.10px;top:150.23px;font-size:23.26px;line-height:23.26px;color:#252423;">Data</div><div class="t" style="left:537.31px;top:182.23px;font-size:23.26px;line-height:23.26px;color:#252423;transform:scaleX(1.0550);">hub</div><div class="t" style="left:629.56px;top:150.23px;font-size:23.26px;line-height:23.26px;color:#252423;transform:scaleX(0.8989);">SQL</div><div class="t" style="left:617.49px;top:182.23px;font-size:23.26px;line-height:23.26px;color:#252423;transform:scaleX(0.9617);">Server</div><div class="t" style="left:702.83px;top:150.23px;font-size:23.26px;line-height:23.26px;color:#252423;transform:scaleX(0.9812);">Enter</div><div class="t" style="left:707.02px;top:182.23px;font-size:23.26px;line-height:23.26px;color:#252423;">data</div><div class="t" style="left:774.11px;top:150.23px;font-size:23.26px;line-height:23.26px;color:#252423;transform:scaleX(0.9898);">Dataverse</div><div class="t" style="left:903.16px;top:150.23px;font-size:23.26px;line-height:23.26px;color:#252423;transform:scaleX(0.9633);">Recent</div><div class="t" style="left:887.06px;top:182.23px;font-size:23.26px;line-height:23.26px;color:#252423;transform:scaleX(0.9771);">sources</div><div class="t" style="left:1033.09px;top:150.23px;font-size:23.26px;line-height:23.26px;color:#252423;">Transform</div><div class="t" style="left:1050.63px;top:182.23px;font-size:23.26px;line-height:23.26px;color:#252423;transform:scaleX(0.9892);">data</div><div class="t" style="left:1144.72px;top:150.23px;font-size:23.26px;line-height:23.26px;color:#252423;transform:scaleX(0.9859);">Refresh</div><div class="t" style="left:1278.05px;top:150.23px;font-size:23.26px;line-height:23.26px;color:#252423;transform:scaleX(1.0207);">New</div><div class="t" style="left:1273.93px;top:182.23px;font-size:23.26px;line-height:23.26px;color:#252423;transform:scaleX(0.9825);">visual</div><div class="t" style="left:1362.01px;top:150.23px;font-size:23.26px;line-height:23.26px;color:#252423;transform:scaleX(0.9648);">Text</div><div class="t" style="left:1362.43px;top:182.23px;font-size:23.26px;line-height:23.26px;color:#252423;transform:scaleX(1.0547);">box</div><div class="t" style="left:1444.42px;top:150.23px;font-size:23.26px;line-height:23.26px;color:#252423;transform:scaleX(1.0890);">More</div><div class="t" style="left:1427.33px;top:182.23px;font-size:23.26px;line-height:23.26px;color:#252423;transform:scaleX(0.9589);">visuals</div><div class="t" style="left:1582.04px;top:150.23px;font-size:23.26px;line-height:23.26px;color:#252423;transform:scaleX(1.0297);">New</div><div class="t" style="left:1561.46px;top:182.23px;font-size:23.26px;line-height:23.26px;color:#252423;">measure</div><div class="t" style="left:1674.39px;top:150.23px;font-size:23.26px;line-height:23.26px;color:#252423;transform:scaleX(1.0193);">Quick</div><div class="t" style="left:1659.86px;top:182.23px;font-size:23.26px;line-height:23.26px;color:#252423;transform:scaleX(1.0053);">measure</div><div class="t" style="left:1791.84px;top:150.23px;font-size:23.26px;line-height:23.26px;color:#c8c6c4;transform:scaleX(1.0108);">Sensitivity</div><div class="t" style="left:1939.26px;top:150.23px;font-size:23.26px;line-height:23.26px;color:#252423;transform:scaleX(1.0198);">Publish</div><div class="t" style="left:141.81px;top:79.54px;font-size:23.84px;line-height:23.84px;color:#252423;transform:scaleX(0.9774);">Cut</div><div class="t" style="left:141.81px;top:127.54px;font-size:23.84px;line-height:23.84px;color:#252423;transform:scaleX(0.9784);">Copy</div><div class="t" style="left:141.32px;top:175.64px;font-size:23.84px;line-height:23.84px;color:#252423;transform:scaleX(1.0154);">Format painter</div><div class="t" style="left:483.50px;top:112.56px;font-size:23.69px;line-height:23.69px;color:#ffffff;font-weight:bold;transform:scaleX(0.9495);">X</div><div class="t" style="left:2759.99px;top:13.91px;font-size:26.45px;line-height:26.45px;color:#ffffff;transform:scaleX(0.8501);">Share</div><div class="t" style="left:530.24px;top:268.96px;font-size:71.40px;line-height:71.40px;color:#252423;transform:scaleX(0.9880);letter-spacing:-0.65px;-webkit-text-stroke:0.9px #252423;">中国主要城市交通健康榜</div><div class="t" style="left:115.78px;top:448.85px;font-size:29.94px;line-height:29.94px;color:#252423;transform:scaleX(0.9027);">Segoe UI</div><div class="t" style="left:471.36px;top:448.85px;font-size:29.94px;line-height:29.94px;color:#252423;transform:scaleX(0.9320);">40</div><div class="t" style="left:688.97px;top:445.86px;font-size:40.99px;line-height:40.99px;color:#333;font-weight:bold;transform:scaleX(0.8479);">B</div><div class="t" style="left:1302.00px;top:455.52px;font-size:22.09px;line-height:22.09px;color:#252423;transform:scaleX(0.9808);">X</div><div class="t" style="left:1317.56px;top:449.87px;font-size:11.92px;line-height:11.92px;color:#252423;font-weight:bold;transform:scaleX(1.0466);">2</div><div class="t" style="left:1365.48px;top:455.52px;font-size:22.09px;line-height:22.09px;color:#252423;transform:scaleX(1.0171);">X</div><div class="t" style="left:1381.56px;top:472.37px;font-size:11.92px;line-height:11.92px;color:#252423;font-weight:bold;transform:scaleX(1.0466);">2</div><div class="t" style="left:1501.89px;top:454.20px;font-size:8.00px;line-height:8.00px;color:#252423;">1</div><div class="t" style="left:1501.60px;top:462.70px;font-size:8.00px;line-height:8.00px;color:#252423;">2</div><div class="t" style="left:1501.70px;top:470.70px;font-size:8.00px;line-height:8.00px;color:#252423;">3</div><div class="t" style="left:166.19px;top:552.64px;font-size:29.36px;line-height:29.36px;color:#777675;transform:scaleX(0.9092);">Value</div><div class="t" style="left:312.36px;top:552.64px;font-size:29.36px;line-height:29.36px;color:#777675;transform:scaleX(0.8887);">Review</div><div class="t" style="left:1825.34px;top:268.64px;font-size:33.72px;line-height:33.72px;color:#252423;-webkit-text-stroke:0.9px #252423;transform:scaleX(0.9623);">Filters</div><div class="t" style="left:1849.87px;top:354.48px;font-size:27.91px;line-height:27.91px;color:#252423;transform:scaleX(0.8964);">Search</div><div class="t" style="left:1769.04px;top:446.06px;font-size:25.58px;line-height:25.58px;color:#252423;transform:scaleX(0.9346);">Filters on this page</div><div class="t" style="left:1769.06px;top:641.06px;font-size:25.58px;line-height:25.58px;color:#252423;transform:scaleX(0.9259);">Filters on all pages</div><div class="t" style="left:1848.25px;top:526.95px;font-size:25.00px;line-height:25.00px;color:#252423;transform:scaleX(0.9560);">Add data fields here</div><div class="t" style="left:1848.25px;top:721.75px;font-size:25.00px;line-height:25.00px;color:#252423;transform:scaleX(0.9560);">Add data fields here</div><div class="t" style="left:2170.99px;top:269.25px;font-size:32.99px;line-height:32.99px;color:#252423;-webkit-text-stroke:0.9px #252423;">Format</div><div class="t" style="left:2230.13px;top:378.66px;font-size:28.63px;line-height:28.63px;color:#555;transform:scaleX(0.9102);">Search</div><div class="t" style="left:2179.60px;top:454.80px;font-size:30.23px;line-height:30.23px;color:#252423;-webkit-text-stroke:0.75px #252423;transform:scaleX(0.9231);">General</div><div class="t" style="left:2202.96px;top:556.74px;font-size:24.42px;line-height:24.42px;color:#252423;-webkit-text-stroke:0.55px #252423;transform:scaleX(1.0183);">Properties</div><div class="t" style="left:2204.46px;top:639.24px;font-size:24.42px;line-height:24.42px;color:#252423;-webkit-text-stroke:0.55px #252423;transform:scaleX(1.0089);">Title</div><div class="t" style="left:2465.11px;top:641.09px;font-size:18.60px;line-height:18.60px;color:#666;transform:scaleX(1.0157);">Off</div><div class="t" style="left:2203.02px;top:720.74px;font-size:24.42px;line-height:24.42px;color:#252423;-webkit-text-stroke:0.55px #252423;transform:scaleX(0.9884);">Effects</div><div class="t" style="left:2203.01px;top:802.64px;font-size:24.42px;line-height:24.42px;color:#252423;-webkit-text-stroke:0.55px #252423;transform:scaleX(0.9930);">Header icons</div><div class="t" style="left:2465.11px;top:804.49px;font-size:18.60px;line-height:18.60px;color:#666;transform:scaleX(1.0157);">Off</div><div class="t" style="left:2204.95px;top:884.74px;font-size:24.42px;line-height:24.42px;color:#252423;-webkit-text-stroke:0.55px #252423;transform:scaleX(1.0547);">Alt text</div><div class="t" style="left:2533.36px;top:269.15px;font-size:32.99px;line-height:32.99px;color:#252423;-webkit-text-stroke:0.9px #252423;transform:scaleX(0.9749);">Data</div><div class="t" style="left:2584.23px;top:350.26px;font-size:28.63px;line-height:28.63px;color:#555;transform:scaleX(0.9068);">Search</div><div class="t" style="left:2600.33px;top:422.53px;font-size:23.26px;line-height:23.26px;color:#333;transform:scaleX(0.9091);">TOP</div><div class="t" style="left:2599.55px;top:470.49px;font-size:23.80px;line-height:23.80px;color:#333;">交通健康排名</div><div class="t" style="left:2669.65px;top:518.49px;font-size:23.80px;line-height:23.80px;color:#333;">交通健康指数</div><div class="t" style="left:2669.65px;top:566.49px;font-size:23.80px;line-height:23.80px;color:#333;">健康类型</div><div class="t" style="left:2669.65px;top:614.49px;font-size:23.80px;line-height:23.80px;color:#333;">健康类型2</div><div class="t" style="left:2669.65px;top:662.49px;font-size:23.80px;line-height:23.80px;color:#333;">城市</div><div class="t" style="left:2669.65px;top:710.49px;font-size:23.80px;line-height:23.80px;color:#333;">平均速度(KM/h)</div><div class="t" style="left:2669.65px;top:758.49px;font-size:23.80px;line-height:23.80px;color:#333;">拥堵延时指数</div><div class="t" style="left:2669.65px;top:806.49px;font-size:23.80px;line-height:23.80px;color:#333;">排名</div><div class="t" style="left:2599.55px;top:854.49px;font-size:23.80px;line-height:23.80px;color:#333;">六项指标</div><div class="t" style="left:2599.55px;top:902.49px;font-size:23.80px;line-height:23.80px;color:#333;">城市类型统计</div><div class="t" style="left:2669.65px;top:950.49px;font-size:23.80px;line-height:23.80px;color:#333;">健康城市数量</div><div class="t" style="left:2669.65px;top:998.49px;font-size:23.80px;line-height:23.80px;color:#333;">城市数量</div><div class="t" style="left:2599.55px;top:1046.49px;font-size:23.80px;line-height:23.80px;color:#333;">更新时间</div><div class="t" style="left:375.16px;top:1536.24px;font-size:24.42px;line-height:24.42px;color:#252423;-webkit-text-stroke:0.35px #252423;transform:scaleX(0.9166);">Page 1</div><div class="t" style="left:5.62px;top:1596.30px;font-size:24.71px;line-height:24.71px;color:#605e5c;transform:scaleX(0.9298);">Page 1 of 1</div><div class="t" style="left:2341.84px;top:1595.73px;font-size:23.26px;line-height:23.26px;color:#605e5c;transform:scaleX(0.9813);">65%</div><div class="t" style="left:2485.15px;top:1596.89px;font-size:24.13px;line-height:24.13px;color:#605e5c;">Update available (click to download)</div>
</body></html>
